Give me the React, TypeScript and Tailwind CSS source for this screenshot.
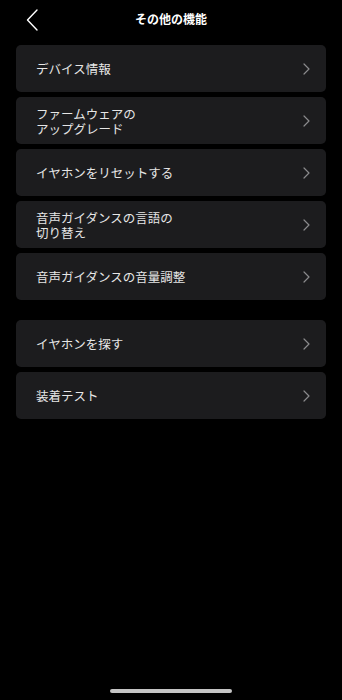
import React from "react";

const groups: string[][][] = [
  [
    ["デバイス情報"],
    ["ファームウェアの", "アップグレード"],
    ["イヤホンをリセットする"],
    ["音声ガイダンスの言語の", "切り替え"],
    ["音声ガイダンスの音量調整"],
  ],
  [["イヤホンを探す"], ["装着テスト"]],
];

function Chevron() {
  return (
    <svg width="7" height="12" viewBox="0 0 7 12" fill="none" className="shrink-0">
      <path d="M1 1l5 5-5 5" stroke="#8a8a8c" strokeWidth="1.2" strokeLinecap="round" strokeLinejoin="round" />
    </svg>
  );
}

export default function App() {
  return (
    <div
      className="w-[342px] h-[700px] bg-black flex flex-col overflow-hidden"
      style={{ fontFamily: '"Noto Sans CJK JP", "Noto Sans", sans-serif' }}
    >
      <div className="h-[38px] flex items-center relative shrink-0">
        <div className="pl-[26px] pt-[1px]">
          <svg width="12" height="22" viewBox="0 0 12 22" fill="none">
            <path d="M11 1L1.5 11 11 21" stroke="#ffffff" strokeWidth="1.4" strokeLinecap="round" strokeLinejoin="round" />
          </svg>
        </div>
        <div className="absolute left-0 right-0 top-0 h-[38px] flex items-center justify-center text-[12px] font-bold text-white">
          その他の機能
        </div>
      </div>
      <div className="flex flex-col gap-[20px] px-[16px] pt-[7px]">
        {groups.map((g, gi) => (
          <div key={gi} className="flex flex-col gap-[5px]">
            {g.map((lines, i) => (
              <div
                key={i}
                className="h-[47px] bg-[#1c1c1e] rounded-[5px] flex items-center justify-between pl-[20px] pr-[16px]"
              >
                <div className="text-[12.5px] leading-[15px] text-[#e6e6e6]">
                  {lines.map((l, k) => (
                    <div key={k}>{l}</div>
                  ))}
                </div>
                <Chevron />
              </div>
            ))}
          </div>
        ))}
      </div>
      <div className="flex-1" />
      <div className="flex justify-center pb-[7px]">
        <div className="w-[122px] h-[4px] rounded-full bg-[#c4c4c4]" />
      </div>
    </div>
  );
}
